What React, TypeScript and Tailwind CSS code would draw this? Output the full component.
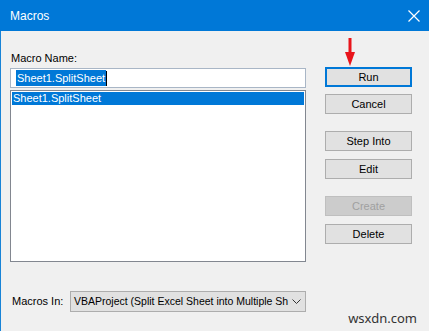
import React from 'react';

const font = { fontFamily: '"Liberation Sans", Arial, sans-serif' };

const DlgButton = ({ label, primary, disabled }: { label: string; primary?: boolean; disabled?: boolean }) => {
  const cls = disabled
    ? 'bg-[#cccccc] border border-[#bfbfbf] text-[#a0a0a0]'
    : primary
    ? 'bg-[#e1e1e1] border-2 border-[#0078d7] text-black'
    : 'bg-[#e1e1e1] border border-[#adadad] text-black';
  return (
    <div className={`h-[20px] w-[87px] flex items-center justify-center text-[11px] ${cls}`}>{label}</div>
  );
};

export default function App() {
  return (
    <div className="w-[429px] h-[331px] bg-[#f0f0f0] flex flex-col relative overflow-hidden" style={font}>
      {/* Title bar */}
      <div className="h-[31px] bg-[#0078d7] flex items-center justify-between pl-[10px] pr-[9px] shrink-0">
        <span className="text-white text-[12px]">Macros</span>
        <svg width="12" height="12" viewBox="0 0 12 12">
          <path d="M0.5 0.5 L11.5 11.5 M11.5 0.5 L0.5 11.5" stroke="#ffffff" strokeWidth="1.2" />
        </svg>
      </div>

      {/* Body */}
      <div className="flex-1 border-l border-[#1883d7] flex pl-[9px]">
        {/* Left column */}
        <div className="w-[296px] flex flex-col pt-[19px]">
          <div className="h-[16px] leading-[16px] text-[11px] text-black pl-[1px]">Macro Name:</div>
          <div className="mt-[2px] h-[20px] bg-white border border-[#a9b6c6] flex items-center pl-[5px]">
            <span className="bg-[#0078d7] text-white text-[11px] leading-[16px] px-[1px]">Sheet1.SplitSheet</span>
            <span className="w-px h-[15px] bg-black" />
          </div>
          <div className="mt-[2px] h-[172px] bg-white border border-[#828790] p-[1px]">
            <div className="h-[13px] bg-[#0078d7] text-white text-[11px] leading-[13px] pl-[1px]">Sheet1.SplitSheet</div>
          </div>
          <div className="mt-[29px] flex items-center">
            <span className="text-[11px] text-black pl-[2px] w-[60px]">Macros In:</span>
            <div className="w-[236px] h-[21px] bg-[#e1e1e1] border border-[#adadad] flex items-center pl-[3px] pr-[6px]">
              <span className="flex-1 whitespace-nowrap text-[10.5px] text-black">
                VBAProject (Split Excel Sheet into Multiple Sh
              </span>
              <svg width="9" height="6" viewBox="0 0 9 6" className="ml-[4px] shrink-0">
                <path d="M0.5 0.5 L4.5 4.5 L8.5 0.5" stroke="#333" strokeWidth="1" fill="none" />
              </svg>
            </div>
          </div>
        </div>

        {/* Right column */}
        <div className="ml-[19px] pt-[36px] flex flex-col relative">
          <svg width="10" height="28" viewBox="0 0 10 28" className="absolute left-[20px] top-[7px]">
            <rect x="3.5" y="0" width="3" height="15" fill="#e8141b" />
            <path d="M0 14 L10 14 L5 28 Z" fill="#e8141b" />
          </svg>
          <DlgButton label="Run" primary />
          <div className="mt-[7px]"><DlgButton label="Cancel" /></div>
          <div className="mt-[17px]"><DlgButton label="Step Into" /></div>
          <div className="mt-[8px]"><DlgButton label="Edit" /></div>
          <div className="mt-[17px]"><DlgButton label="Create" disabled /></div>
          <div className="mt-[8px]"><DlgButton label="Delete" /></div>
        </div>
      </div>

      <span className="absolute right-[12px] bottom-[3px] text-[13px] text-[#333]" style={{ fontFamily: '"Noto Sans", sans-serif' }}>
        wsxdn.com
      </span>
    </div>
  );
}
